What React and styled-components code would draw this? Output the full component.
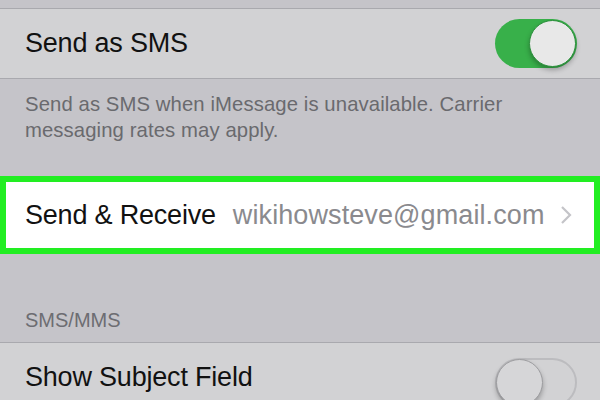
import React from 'react';
import styled, { createGlobalStyle } from 'styled-components';

const Global = createGlobalStyle`
  html, body {
    margin: 0;
    padding: 0;
    background: #c5c4c9;
  }
  body {
    font-family: "Liberation Sans", Arial, sans-serif;
    -webkit-font-smoothing: antialiased;
  }
`;

const Screen = styled.div`
  width: 600px;
  height: 400px;
  overflow: hidden;
  display: flex;
  flex-direction: column;
  background: #c5c4c9;
`;

const Spacer = styled.div`
  height: ${p => p.h}px;
  flex-shrink: 0;
`;

const Row = styled.div`
  flex-shrink: 0;
  height: ${p => p.h || 69}px;
  box-sizing: border-box;
  display: flex;
  align-items: center;
  justify-content: space-between;
  padding: 0 23px 0 25px;
  background: #d2d2d4;
  border-top: 1px solid #a9a9ae;
  border-bottom: 1px solid #a9a9ae;
`;

const Label = styled.span`
  font-size: 27px;
  color: #111;
  letter-spacing: -0.2px;
`;

const Footnote = styled.p`
  margin: 0;
  flex-shrink: 0;
  height: 97px;
  box-sizing: border-box;
  padding: 12px 50px 0 25px;
  font-size: 20.3px;
  line-height: 26px;
  color: #6a6a6e;
  letter-spacing: 0.1px;
`;

const Highlight = styled.div`
  flex-shrink: 0;
  height: 78px;
  box-sizing: border-box;
  border: 6px solid #22ee22;
  background: #fff;
  display: flex;
  align-items: center;
  padding: 0 22px 0 19px;
`;

const Value = styled.span`
  flex: 1;
  font-size: 27px;
  color: #8a8a8e;
  margin-left: 17px;
  letter-spacing: 0.1px;
`;

const SectionHeader = styled.div`
  flex-shrink: 0;
  height: 88px;
  box-sizing: border-box;
  display: flex;
  align-items: flex-end;
  padding: 0 0 11px 25px;
  font-size: 20px;
  line-height: 22px;
  color: #6d6d72;
`;

const Track = styled.div`
  position: relative;
  width: 82px;
  height: 49px;
  border-radius: 25px;
  box-sizing: border-box;
  flex-shrink: 0;
  background: ${p => (p.on ? '#38b04a' : '#d2d2d4')};
  border: ${p => (p.on ? 'none' : '2px solid #bcbcbf')};
  margin-top: ${p => p.offset || 0}px;
`;

const Knob = styled.div`
  position: absolute;
  top: ${p => (p.on ? 1 : -1)}px;
  ${p => (p.on ? 'right: 1px;' : 'left: -1px;')}
  width: 47px;
  height: 47px;
  border-radius: 50%;
  box-sizing: border-box;
  background: ${p => (p.on ? '#e8e8e8' : '#d6d6d8')};
  border: 1px solid ${p => (p.on ? '#2a8f3a' : '#9d9da0')};
  box-shadow: 0 3px 5px rgba(0, 0, 0, 0.28);
`;

function Toggle({ on, offset }) {
  return (
    <Track on={on} offset={offset}>
      <Knob on={on} />
    </Track>
  );
}

function Chevron() {
  return (
    <svg width="12" height="20" viewBox="0 0 12 20">
      <polyline points="2,2 10,10 2,18" fill="none" stroke="#c4c4c8" strokeWidth="2.2" />
    </svg>
  );
}

export default function App() {
  return (
    <>
      <Global />
      <Screen>
        <Spacer h={8} />
        <Row h={71}>
          <Label>Send as SMS</Label>
          <Toggle on />
        </Row>
        <Footnote>
          Send as SMS when iMessage is unavailable. Carrier messaging rates may apply.
        </Footnote>
        <Highlight>
          <Label>Send &amp; Receive</Label>
          <Value>wikihowsteve@gmail.com</Value>
          <Chevron />
        </Highlight>
        <SectionHeader>SMS/MMS</SectionHeader>
        <Row h={71}>
          <Label>Show Subject Field</Label>
          <Toggle offset={10} />
        </Row>
      </Screen>
    </>
  );
}
